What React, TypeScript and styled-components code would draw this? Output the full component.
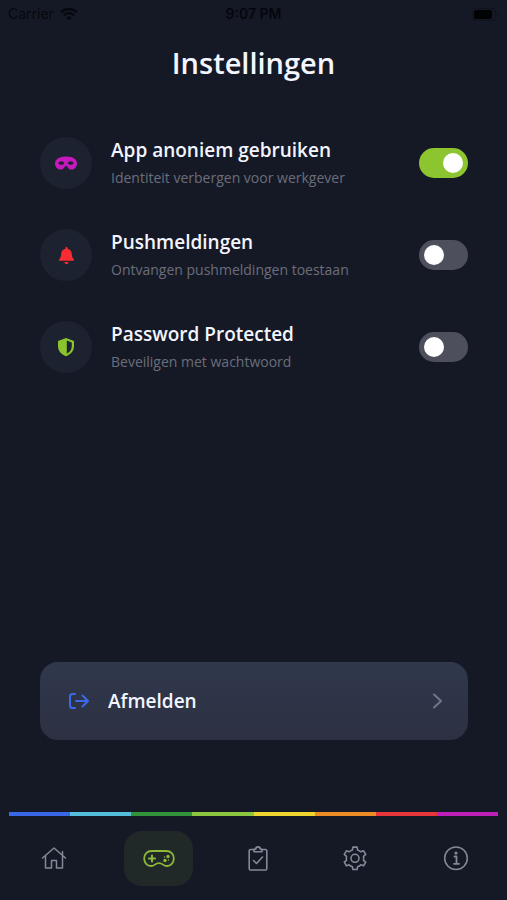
import React, { useState } from "react";
import styled, { createGlobalStyle } from "styled-components";
import { FaMask, FaBell } from "react-icons/fa";

const GlobalStyle = createGlobalStyle`
  * { box-sizing: border-box; }
  body { margin: 0; background: #151926; }
  button { font: inherit; border: 0; padding: 0; background: none; cursor: pointer; }
`;

const Screen = styled.div`
  min-height: 100vh;
  display: flex;
  flex-direction: column;
  background: #151926;
  color: #f3f5ff;
  font-family: "Open Sans", sans-serif;
`;

const StatusBar = styled.div`
  display: grid;
  grid-template-columns: 1fr auto 1fr;
  align-items: center;
  height: 28px;
  padding: 0 8px;
  color: #05070c;
  font: 14px/28px Inter, sans-serif;
`;

const Carrier = styled.span`
  display: flex;
  align-items: center;
  gap: 6px;
  color: #06080e;
`;

const Clock = styled.time`
  font-weight: 600;
`;

const Battery = styled.svg`
  justify-self: end;
`;

const Title = styled.h1`
  margin: 16px 0 0;
  text-align: center;
  font-size: 29px;
  line-height: 38px;
  font-weight: 600;
`;

const Settings = styled.main`
  display: flex;
  flex-direction: column;
  gap: 40px;
  margin: 55px 39px 40px 40px;
`;

const SettingRow = styled.label`
  display: flex;
  align-items: center;
  min-height: 52px;
  cursor: pointer;
`;

const IconDisc = styled.span<{ $color: string }>`
  display: grid;
  place-items: center;
  flex: none;
  width: 52px;
  height: 52px;
  margin-right: 19px;
  border-radius: 50%;
  background: #1c222f;
  color: ${(p) => p.$color};
`;

const SettingText = styled.span`
  flex: 1;
  display: flex;
  flex-direction: column;
  gap: 4px;
`;

const SettingName = styled.span`
  font-size: 19px;
  line-height: 26px;
  font-weight: 600;
`;

const SettingHint = styled.span`
  color: #6b6e7a;
  font-size: 14px;
  line-height: 22px;
`;

const Switch = styled.input`
  appearance: none;
  flex: none;
  width: 49px;
  height: 30px;
  margin: 0;
  padding: 5px;
  border-radius: 15px;
  background: #4d505c;
  cursor: pointer;

  &::before {
    content: "";
    display: block;
    width: 20px;
    height: 20px;
    border-radius: 50%;
    background: #fff;
  }
  &:checked { background: #8dc530; }
  &:checked::before { margin-left: auto; }
`;

const LogoutButton = styled.button`
  display: flex;
  align-items: center;
  margin: auto 39px 72px 40px;
  height: 78px;
  padding: 0 24px 0 28px;
  border-radius: 18px;
  background: linear-gradient(#30384c, #2c3042);
  color: #f3f5ff;
`;

const LogoutText = styled.span`
  flex: 1;
  margin-left: 18px;
  text-align: left;
  font-size: 19px;
  font-weight: 600;
`;

const Rainbow = styled.div`
  display: flex;
  height: 4px;
  margin: 0 9px;
`;

const Band = styled.span<{ $color: string }>`
  flex: 1;
  background: ${(p) => p.$color};
`;

const TabBar = styled.nav`
  display: grid;
  grid-template-columns: 102fr 107fr 92fr 102fr 99fr;
  justify-items: center;
  padding: 15px 2px 14px 3px;
`;

const Tab = styled.button<{ $active: boolean }>`
  display: grid;
  place-items: center;
  width: 69px;
  height: 55px;
  border-radius: 18px;
  background: ${(p) => (p.$active ? "#202927" : "transparent")};
  color: ${(p) => (p.$active ? "#8eb83a" : "#858997")};
`;

const Line = styled.svg`
  fill: none;
  stroke: currentColor;
  stroke-linejoin: round;
  stroke-linecap: round;
`;

const Shield = () => (
  <svg width="18" height="20" viewBox="0 0 18 20" aria-hidden="true">
    <path fillRule="evenodd" fill="currentColor" d="M9 1 17 4v5c0 5-3.200 8.400-8 10.200C4.200 17.400 1 14 1 9V4ZM9.800 3.500v13c3.300-1.600 5-4 5-7.500V5.400Z" />
  </svg>
);

const Wifi = () => (
  <svg width="18" height="14" viewBox="0 0 18 14" fill="none" stroke="currentColor" strokeWidth="2.400" aria-hidden="true">
    <path d="M1.200 5.200a11 11 0 0 1 15.600 0M4 8.200a7 7 0 0 1 10 0" />
    <path d="M6.300 10.500a3.900 3.900 0 0 1 5.400 0L9 13.300Z" fill="currentColor" stroke="none" />
  </svg>
);

const Home = () => (
  <Line width="26" height="26" viewBox="0 0 26 26" strokeWidth="1.500">
    <path d="M1.500 12 13 2l11.500 10M4.500 9.800V22h6v-7.500h5V22h6V9.800M21.500 9.200V5.500" />
  </Line>
);

const Gamepad = () => (
  <Line width="32" height="20" viewBox="0 0 32 20" strokeWidth="1.800">
    <path d="M8.500 2h15a7.200 7.200 0 0 1 7.300 7.500c0 4.300-3 7.500-6.800 7.500-4 0-3.800-2.800-8-2.800s-4 2.800-8 2.800c-3.800 0-6.800-3.200-6.800-7.500A7.200 7.200 0 0 1 8.500 2Z" />
    <path d="M9 6.500v6M6 9.500h6" strokeWidth="2" />
    <g fill="currentColor" stroke="none">
      <circle cx="25" cy="7.500" r="1.700" />
      <circle cx="22" cy="11.500" r="1.700" />
      <circle cx="25.500" cy="11" r=".7" />
      <circle cx="21.500" cy="8" r=".7" />
    </g>
  </Line>
);

const Clipboard = () => (
  <Line width="20" height="26" viewBox="0 0 20 26" strokeWidth="1.600">
    <path d="M6 3.500H2.500c-.9 0-1.300.4-1.300 1.300v17.900c0 .9.4 1.300 1.300 1.300h15c.9 0 1.300-.4 1.300-1.300V4.800c0-.9-.4-1.300-1.300-1.300H14" />
    <path d="M6 3.200v2.500h8V3.200h-1.700a2.300 2.300 0 0 0-4.600 0ZM5.500 14.500l3 3 6-6.500" />
  </Line>
);

const Gear = () => (
  <Line width="26" height="26" viewBox="0 0 26 26" strokeWidth="1.600">
    <path d="M10.400 3.900 10.900 1.100h4.200l.5 2.800c1.400.5 2.300 1 3.300 1.900l2.700-1 2.100 3.600-2.200 1.900c.3 1.400.3 2.600 0 4l2.200 1.900-2.100 3.600-2.700-1c-1 .9-1.900 1.400-3.300 1.900l-.5 2.800h-4.200l-.5-2.800c-1.400-.5-2.300-1-3.300-1.900l-2.700 1-2.100-3.600L4.500 14.300c-.3-1.400-.3-2.600 0-4L2.300 8.400l2.100-3.600 2.700 1c1-.9 1.900-1.400 3.300-1.900Z" />
    <circle cx="13" cy="12.300" r="4" />
  </Line>
);

const Info = () => (
  <Line width="26" height="26" viewBox="0 0 26 26" strokeWidth="1.500">
    <circle cx="13" cy="12.300" r="11.300" />
    <path d="M11.500 10.500h2v7M11 17.800h5" strokeWidth="1.800" />
    <circle cx="13" cy="7" r="1.600" fill="currentColor" stroke="none" />
  </Line>
);

const settings = [
  { name: "App anoniem gebruiken", hint: "Identiteit verbergen voor werkgever", color: "#c619bd", icon: <FaMask size={22} /> },
  { name: "Pushmeldingen", hint: "Ontvangen pushmeldingen toestaan", color: "#fb2c31", icon: <FaBell size={17} /> },
  { name: "Password Protected", hint: "Beveiligen met wachtwoord", color: "#8bc42c", icon: <Shield /> },
];

const bands = ["#3a67e8", "#55bddc", "#319239", "#8dc63f", "#efd62f", "#ed8c27", "#e83539", "#be1fb9"];

const tabs = [
  { name: "Home", icon: <Home /> },
  { name: "Spel", icon: <Gamepad /> },
  { name: "Taken", icon: <Clipboard /> },
  { name: "Instellingen", icon: <Gear /> },
  { name: "Informatie", icon: <Info /> },
];

export default function App() {
  const [enabled, setEnabled] = useState([true, false, false]);
  const [active, setActive] = useState(1);

  return (
    <Screen>
      <GlobalStyle />
      <StatusBar>
        <Carrier>Carrier <Wifi /></Carrier>
        <Clock>9:07 PM</Clock>
        <Battery width="27" height="13" viewBox="0 0 27 13" aria-hidden="true">
          <rect x=".5" y=".5" width="23" height="12" rx="3.500" fill="none" stroke="#10131d" />
          <rect x="2" y="2" width="18" height="9" rx="2" fill="#010204" />
          <path d="M25 4.500c2 .7 2 3.300 0 4Z" fill="#10131d" />
        </Battery>
      </StatusBar>
      <Title>Instellingen</Title>
      <Settings>
        {settings.map((s, i) => (
          <SettingRow key={s.name}>
            <IconDisc $color={s.color}>{s.icon}</IconDisc>
            <SettingText>
              <SettingName>{s.name}</SettingName>
              <SettingHint>{s.hint}</SettingHint>
            </SettingText>
            <Switch
              type="checkbox"
              role="switch"
              checked={enabled[i]}
              onChange={() => setEnabled(enabled.map((on, j) => (j === i ? !on : on)))}
            />
          </SettingRow>
        ))}
      </Settings>
      <LogoutButton type="button">
        <Line width="22" height="18" viewBox="0 0 22 18" strokeWidth="2" color="#3c69ec">
          <path d="M7 2H4.500A2.500 2.500 0 0 0 2 4.500v9A2.500 2.500 0 0 0 4.500 16H7M8 9h12M14.500 3.500 20 9l-5.500 5.500" />
        </Line>
        <LogoutText>Afmelden</LogoutText>
        <Line width="12" height="18" viewBox="0 0 12 18" strokeWidth="2" color="#70778a">
          <path d="m2 2.500 7 6.500-7 6.500" />
        </Line>
      </LogoutButton>
      <Rainbow>
        {bands.map((c) => <Band key={c} $color={c} />)}
      </Rainbow>
      <TabBar>
        {tabs.map((t, i) => (
          <Tab
            key={t.name}
            type="button"
            aria-label={t.name}
            aria-current={active === i ? "page" : undefined}
            $active={active === i}
            onClick={() => setActive(i)}
          >
            {t.icon}
          </Tab>
        ))}
      </TabBar>
    </Screen>
  );
}
